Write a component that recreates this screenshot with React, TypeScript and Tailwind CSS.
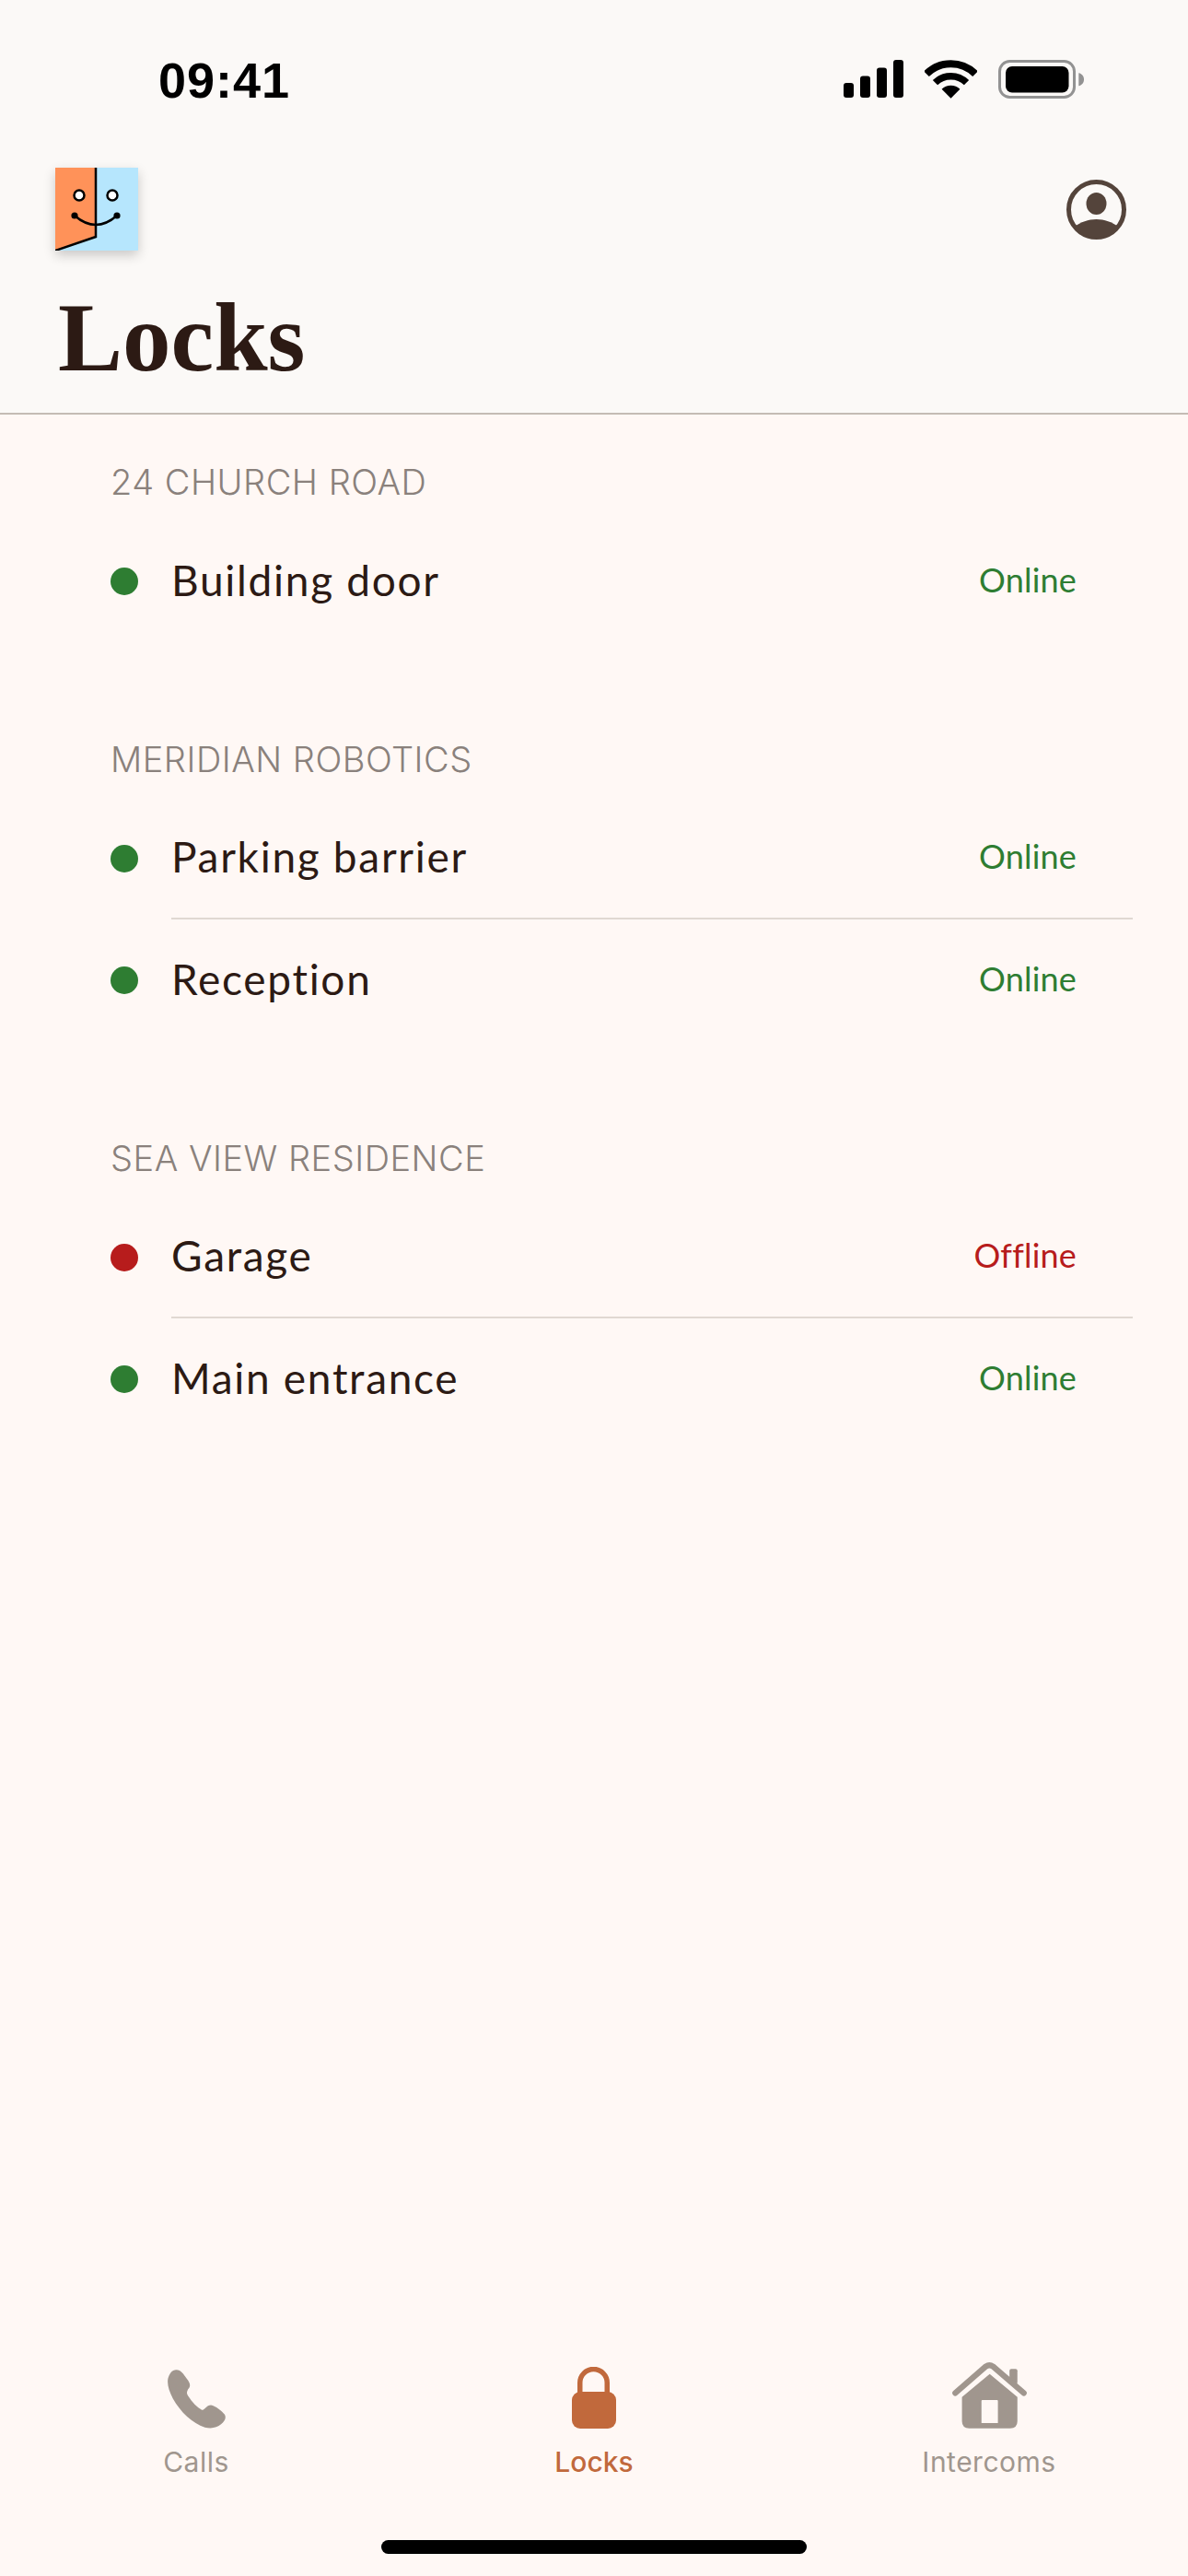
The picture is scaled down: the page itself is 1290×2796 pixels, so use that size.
const sections = [
  { name: '24 CHURCH ROAD', locks: [{ name: 'Building door', online: true }] },
  {
    name: 'MERIDIAN ROBOTICS',
    locks: [
      { name: 'Parking barrier', online: true },
      { name: 'Reception', online: true },
    ],
  },
  {
    name: 'SEA VIEW RESIDENCE',
    locks: [
      { name: 'Garage', online: false },
      { name: 'Main entrance', online: true },
    ],
  },
];

const Logo = () => (
  <svg viewBox="0 0 90 90" className="h-[90px] w-[90px] shadow-[0_5px_12px_rgba(0,0,0,0.2)]">
    <rect width="90" height="90" fill="#b6e6fd" />
    <path d="M0 0H44V75L0 90Z" fill="#ff9259" />
    <path d="M44 0V75L0 90" fill="none" stroke="#000" strokeWidth="2.5" />
    <circle cx="26" cy="30" r="5.5" fill="#fff" stroke="#000" strokeWidth="2.5" />
    <circle cx="62" cy="30" r="5.5" fill="#fff" stroke="#000" strokeWidth="2.5" />
    <path d="M21 52Q44 72 67 52" fill="none" stroke="#000" strokeWidth="2.5" />
    <circle cx="21" cy="52" r="3.6" fill="#000" />
    <circle cx="67" cy="52" r="3.6" fill="#000" />
  </svg>
);

const ProfileIcon = () => (
  <svg viewBox="0 0 65 65" className="h-[65px] w-[65px]" fill="#54443b">
    <circle cx="32.5" cy="32.5" r="30" fill="none" stroke="#54443b" strokeWidth="5" />
    <ellipse cx="32.5" cy="26" rx="11" ry="12" />
    <path d="M9 51C15 46 24 43 32.5 43C41 43 50 46 56 51A30 30 0 0 1 9 51Z" />
  </svg>
);

const StatusIcons = () => (
  <div className="flex items-start gap-[23px]">
    <svg viewBox="0 0 65 41" className="h-[41px] w-[65px]" fill="#000">
      <rect x="0" y="25" width="11" height="16" rx="3" />
      <rect x="18" y="17.5" width="11" height="23.5" rx="3" />
      <rect x="36" y="8.5" width="11" height="32.5" rx="3" />
      <rect x="54" y="0" width="11" height="41" rx="3" />
    </svg>
    <svg viewBox="0 0 57 42" className="h-[42px] w-[57px]" fill="none" stroke="#000">
      <path d="M2 15.2A37.5 37.5 0 0 1 55 15.2" strokeWidth="8" />
      <path d="M11.5 24.7A24 24 0 0 1 45.5 24.7" strokeWidth="7.5" />
      <path d="M28.5 41.7L18.6 31.8A14 14 0 0 1 38.4 31.8Z" fill="#000" stroke="none" />
    </svg>
    <svg viewBox="0 0 93 42" className="h-[42px] w-[93px]">
      <rect x="1.5" y="1.5" width="81" height="39" rx="11" fill="none" stroke="#929292" strokeWidth="3" />
      <rect x="8" y="7" width="68.5" height="28.5" rx="7" fill="#000" />
      <path d="M87.3 14.3C91 15 93 18 93 21.3C93 24.6 91 27.6 87.3 28.3Z" fill="#929292" />
    </svg>
  </div>
);

const PhoneIcon = () => (
  <svg viewBox="123 97 190 191" className="h-[64px] w-[63px]" fill="#a0968e">
    <path d="M150 97C165 95 175 110 185 125C197 140 200 150 190 160C185 170 185 175 190 182C205 205 220 220 235 228C243 230 250 212 265 212C280 215 300 230 310 243C316 255 310 265 298 275C285 287 265 290 245 285C205 272 165 235 140 190C125 160 118 135 128 115C133 103 141 98 150 97Z" />
  </svg>
);

const LockIcon = () => (
  <svg viewBox="0 0 48 67" className="h-[67px] w-[48px]" fill="#c1693c">
    <path d="M8.75 29V17.25a14.75 14.75 0 0 1 29.5 0V29" fill="none" stroke="#c1693c" strokeWidth="5.5" />
    <rect x="0" y="27" width="48" height="40" rx="9" />
  </svg>
);

const HouseIcon = () => (
  <svg viewBox="68 72 245 216" className="h-[72px] w-[81px]" fill="#a0968e">
    <rect x="256" y="93" width="26" height="50" rx="6" />
    <path d="M78 172L178 85Q190 77 202 85L303 172" fill="none" stroke="#a0968e" strokeWidth="19" strokeLinecap="round" />
    <path
      fillRule="evenodd"
      d="M191 110L282 185V265Q282 288 258 288H124Q100 288 100 265V185ZM167 195Q164 195 164 198V271H218V198Q218 195 215 195Z"
    />
  </svg>
);

const App = () => {
  return (
    <div className="flex min-h-[2796px] flex-col bg-[#fff8f5] font-['Inter',sans-serif]">
      {/* Header */}
      <header className="flex h-[450px] flex-col border-b-2 border-[#c4bcb4] bg-[#fbf9f7]">
        <div className="flex h-[182px] items-start justify-between pl-[172px] pr-[113px] pt-[65px]">
          <span className="font-['Liberation_Sans',sans-serif] text-[54px] leading-[44px] font-bold tracking-[1px] text-black">
            09:41
          </span>
          <StatusIcons />
        </div>
        <div className="flex h-[90px] items-center justify-between pl-[60px] pr-[67px]">
          <Logo />
          <ProfileIcon />
        </div>
        <h1 className="mt-[40px] pl-[63px] font-['Liberation_Serif',serif] text-[105px] leading-[110px] font-bold text-[#2c1a14]">
          Locks
        </h1>
      </header>

      {/* Lock list */}
      <main className="flex flex-col gap-[102px] pt-[48px]">
        {sections.map((section) => (
          <section key={section.name}>
            <h2 className="mb-[17px] pl-[120px] text-[38px] leading-[50px] font-light tracking-[0.5px] text-[#8a817c]">
              {section.name}
            </h2>
            {section.locks.map((lock, i) => (
              <div key={lock.name} className="flex h-[132px] items-stretch pl-[120px] pr-[60px]">
                <div className="flex w-[66px] shrink-0 items-center">
                  <span className={`h-[30px] w-[30px] rounded-full ${lock.online ? 'bg-[#2e7d32]' : 'bg-[#b71c1c]'}`} />
                </div>
                <div
                  className={`flex flex-1 items-center justify-between pr-[61px] ${
                    i < section.locks.length - 1 ? 'border-b-2 border-[#e0d8d2]' : ''
                  }`}
                >
                  <span className="mb-[2px] font-['Lato',sans-serif] text-[46px] leading-[60px] tracking-[1.7px] text-[#2c1a14]">
                    {lock.name}
                  </span>
                  <span
                    className={`mb-[4px] font-['Lato',sans-serif] text-[36px] leading-[48px] tracking-[0.2px] ${
                      lock.online ? 'text-[#2e7d32]' : 'text-[#b71c1c]'
                    }`}
                  >
                    {lock.online ? 'Online' : 'Offline'}
                  </span>
                </div>
              </div>
            ))}
          </section>
        ))}
      </main>

      {/* Tab bar */}
      <nav className="mt-auto flex flex-col items-center">
        <div className="grid w-full grid-cols-3">
          <div className="flex flex-col items-center pr-[4px]">
            <div className="flex h-[72px] items-end">
              <PhoneIcon />
            </div>
            <span className="mt-[18px] text-[30px] leading-[36px] tracking-[0.5px] text-[#a0968e]">Calls</span>
          </div>
          <div className="flex flex-col items-center">
            <div className="flex h-[72px] items-end">
              <LockIcon />
            </div>
            <span className="mt-[18px] text-[30px] leading-[36px] font-medium text-[#c1693c]">Locks</span>
          </div>
          <div className="flex flex-col items-center pr-[2px]">
            <div className="flex h-[72px] items-end">
              <HouseIcon />
            </div>
            <span className="mt-[18px] text-[30px] leading-[36px] tracking-[0.5px] text-[#a0968e]">Intercoms</span>
          </div>
        </div>
        <div className="mt-[67px] mb-[24px] h-[15px] w-[462px] rounded-full bg-black" />
      </nav>
    </div>
  );
};

export default App;
